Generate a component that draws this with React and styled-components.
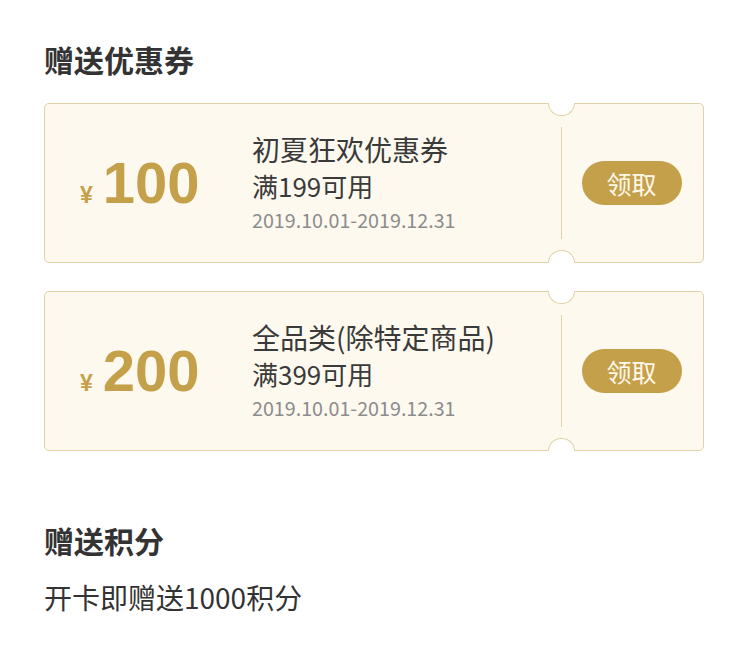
import React from 'react';
import styled, { createGlobalStyle } from 'styled-components';

const GlobalStyle = createGlobalStyle`
  body {
    margin: 0;
    background: #fff;
    font-family: "Noto Sans CJK SC", "Noto Sans", sans-serif;
  }
`;

const coupons = [
  { amount: '100', title: '初夏狂欢优惠券', rule: '满199可用', date: '2019.10.01-2019.12.31' },
  { amount: '200', title: '全品类(除特定商品)', rule: '满399可用', date: '2019.10.01-2019.12.31' },
];

const Page = styled.div`
  padding: 38px 44px 40px;
  color: #333;
`;

const SectionTitle = styled.h2`
  margin: ${({ gap }) => gap || '0'} 0 0;
  font-size: 30px;
  line-height: 42px;
  font-weight: 700;
  color: #333;
`;

const CouponList = styled.div`
  display: flex;
  flex-direction: column;
  gap: 28px;
  margin-top: 23px;
`;

const Coupon = styled.div`
  position: relative;
  display: flex;
  height: 158px;
  border: 1px solid #e0d2a6;
  border-radius: 5px;
  background: #fdf9ef;

  &::before,
  &::after {
    content: '';
    position: absolute;
    left: 503px;
    width: 25px;
    height: 12px;
    border: 1px solid #e0d2a6;
    background: #fff;
  }
  &::before {
    top: -1px;
    border-top: none;
    border-radius: 0 0 14px 14px;
  }
  &::after {
    bottom: -1px;
    border-bottom: none;
    border-radius: 14px 14px 0 0;
  }
`;

const Amount = styled.div`
  width: 172px;
  padding-left: 35px;
  display: flex;
  align-items: baseline;
  align-self: center;
  color: #c5a04b;
  font-family: "Liberation Sans", Arial, sans-serif;
  font-weight: 700;
`;

const Yen = styled.span`
  font-size: 23px;
  margin-right: 10px;
`;

const Value = styled.span`
  font-size: 58px;
  line-height: 60px;
`;

const Info = styled.div`
  flex: 1;
  display: flex;
  flex-direction: column;
  justify-content: center;
`;

const Title = styled.div`
  font-size: 28px;
  line-height: 37px;
  color: #3a3a3a;
`;

const Rule = styled.div`
  font-size: 26px;
  line-height: 36px;
  color: #3a3a3a;
`;

const DateText = styled.div`
  font-size: 19.7px;
  line-height: 32px;
  color: #8c8c8c;
`;

const Action = styled.div`
  width: 141px;
  margin: 23px 0;
  border-left: 1px solid #e0d2a6;
  display: flex;
  align-items: center;
  justify-content: center;
`;

const TakeButton = styled.button`
  width: 100px;
  height: 44px;
  margin-right: 2px;
  border: none;
  border-radius: 22px;
  background: #c5a04b;
  color: #fff8ea;
  font-family: "Noto Sans CJK SC", sans-serif;
  font-size: 25px;
  line-height: 44px;
  padding: 0;
  cursor: pointer;
`;

const Points = styled.p`
  margin: 17px 0 0;
  font-size: 28px;
  line-height: 38px;
  color: #333;
`;

export default function App() {
  return (
    <>
      <GlobalStyle />
      <Page>
        <SectionTitle>赠送优惠券</SectionTitle>
        <CouponList>
          {coupons.map((c) => (
            <Coupon key={c.amount}>
              <Amount>
                <Yen>¥</Yen>
                <Value>{c.amount}</Value>
              </Amount>
              <Info>
                <Title>{c.title}</Title>
                <Rule>{c.rule}</Rule>
                <DateText>{c.date}</DateText>
              </Info>
              <Action>
                <TakeButton>领取</TakeButton>
              </Action>
            </Coupon>
          ))}
        </CouponList>
        <SectionTitle gap="68px">赠送积分</SectionTitle>
        <Points>开卡即赠送1000积分</Points>
      </Page>
    </>
  );
}
